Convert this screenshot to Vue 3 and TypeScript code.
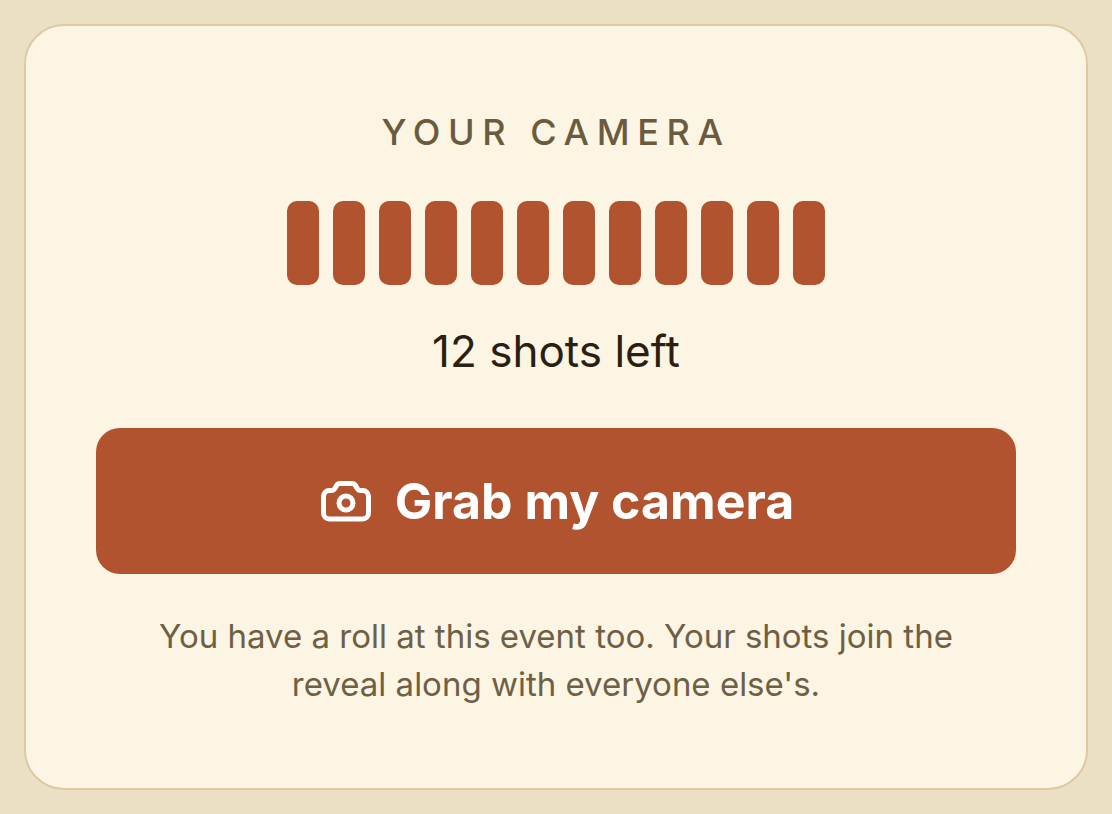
<script setup lang="ts">
const shots = Array.from({ length: 12 }, (_, i) => i);
</script>

<template>
  <div class="page">
    <section class="card">
      <div class="eyebrow">YOUR CAMERA</div>
      <div class="roll">
        <span v-for="s in shots" :key="s" class="shot"></span>
      </div>
      <div class="count">12 shots left</div>
      <button class="grab" type="button">
        <svg class="icon" viewBox="0 0 56 56" fill="none" stroke="currentColor" stroke-width="5" stroke-linecap="round" stroke-linejoin="round">
          <path d="M22 10.500H34C35.500 10.500 36.700 11.200 37.500 12.500L39 15.200C39.800 16.800 40.800 17.500 42.500 17.500H44.500C48 17.500 50.500 20 50.500 23.500V40C50.500 43.500 48 46 44.500 46H11.500C8 46 5.500 43.500 5.500 40V23.500C5.500 20 8 17.500 11.500 17.500H13.500C15.200 17.500 16.200 16.800 17 15.200L18.500 12.500C19.300 11.200 20.500 10.500 22 10.500Z" />
          <circle cx="28" cy="30" r="7" />
        </svg>
        Grab my camera
      </button>
      <p class="note">You have a roll at this event too. Your shots join the<br />reveal along with everyone else's.</p>
    </section>
  </div>
</template>

<style scoped>
.page {
  height: 814px;
  box-sizing: border-box;
  padding: 24px;
  background: #ebe0c4;
  font-family: Inter, "Noto Sans", sans-serif;
}

.card {
  box-sizing: border-box;
  height: 766px;
  padding: 86px 70px 0;
  display: flex;
  flex-direction: column;
  align-items: center;
  background: #fcf5e3;
  border: 2px solid #dccaa3;
  border-radius: 40px;
}

.eyebrow {
  font-size: 36px;
  line-height: 40px;
  font-weight: 500;
  letter-spacing: 7.6px;
  color: #6b5b3e;
}

.roll {
  display: flex;
  gap: 14px;
  margin-top: 49px;
}

.shot {
  width: 32px;
  height: 84px;
  border-radius: 10px;
  background: #b0532e;
}

.count {
  margin-top: 40px;
  font-size: 44px;
  line-height: 52px;
  color: #2a2012;
}

.grab {
  width: 100%;
  height: 146px;
  margin-top: 51px;
  display: flex;
  align-items: center;
  justify-content: center;
  gap: 21px;
  border: none;
  border-radius: 24px;
  background: #b0532e;
  color: #fff;
  font-family: inherit;
  font-size: 50px;
  font-weight: 700;
}

.icon {
  width: 56px;
  height: 56px;
}

.note {
  margin: 38px 0 0;
  font-size: 33px;
  line-height: 48px;
  text-align: center;
  color: #6e5f45;
}
</style>
